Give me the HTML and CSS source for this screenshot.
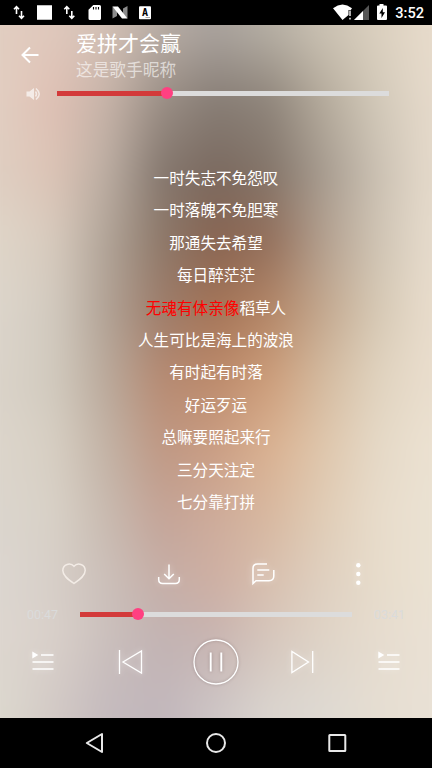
FILE: index.html
```html
<!DOCTYPE html>
<html lang="zh-CN">
<head>
<meta charset="utf-8">
<title>爱拼才会赢</title>
<link rel="stylesheet" href="styles.css">
</head>
<body>
<div class="phone">
  <header class="status">
    <svg class="status-left" width="160" height="25" viewBox="0 0 160 25">
      <g fill="none" stroke="#fff" stroke-width="1.6">
        <path d="M16.500 14V7M14 9.300l2.500-2.600L19 9.300M21.500 11v7M19 15.700l2.500 2.600 2.500-2.600"/>
        <path d="M66.800 14V7M64.300 9.300l2.500-2.600 2.500 2.600M71.800 11v7M69.300 15.700l2.500 2.600 2.500-2.600"/>
      </g>
      <path fill="#fff" d="M37 5.300h15v14.500H37zM93.300 5h6.200q1.500 0 1.500 1.500v12q0 1.500-1.500 1.500H90q-1.500 0-1.500-1.500V9.800z"/>
      <path stroke="#000" stroke-width="1.100" d="M93.500 7v2.500M96 7v2.500M98.500 7v2.500"/>
      <path fill="#8c8c8c" d="M112.500 6.500l4.500 4v5.500l-4.500 2.500zM127.500 6v12.500l-4.500-4V8.500z"/>
      <path fill="#fff" d="M112.500 6.500h5.500l9.500 12h-5.500z"/>
      <rect x="139" y="6.200" width="12" height="13" rx="1" fill="#fff"/>
      <text class="badge-letter" x="145" y="16" text-anchor="middle">A</text>
      <path stroke="#aaa" d="M145.500 17.500h4.500"/>
    </svg>
    <svg class="status-right" width="56" height="25" viewBox="0 0 56 25">
      <path fill="#fff" d="M0 8.200Q9.500.8 19 8.200L17.800 10H15.500v5L9.500 20z"/>
      <path stroke="#ddd" stroke-width="1.600" d="M17 10.500v5.500M17 17.800v1.700"/>
      <path fill="#555" d="M36 5v15H21z"/>
      <path fill="#fff" d="M30 11v9h-9z"/>
      <path fill="#fff" d="M46.500 4h4v1.500H53q1 0 1 1V19q0 1-1 1h-8q-1 0-1-1V6.500q0-1 1-1h1.500z"/>
      <path fill="#000" d="M49.800 8l-3.500 5.500h2.200V18l3.500-5.800h-2.200z"/>
    </svg>
    <span class="clock">3:52</span>
  </header>

  <main class="player">
    <div class="backdrop">
      <i class="band b1"></i><i class="band b2"></i><i class="band b3"></i><i class="band b4"></i>
      <i class="band b5"></i><i class="band b6"></i><i class="band b7"></i><i class="band b8"></i>
      <i class="band b9"></i><i class="band b10"></i><i class="band b11"></i>
    </div>

    <div class="heading">
      <svg class="back" width="20" height="20" viewBox="0 0 20 20"><path d="M18.500 10H3M10 2.500L2.500 10l7.500 7.500"/></svg>
      <div class="titles">
        <h1 class="song">爱拼才会赢</h1>
        <p class="artist">这是歌手昵称</p>
      </div>
    </div>

    <div class="volume">
      <svg class="speaker" width="15" height="14" viewBox="0 0 15 14">
        <path class="solid" d="M.5 4.500h3L8 1v12L3.500 9.500h-3z"/>
        <path class="wave" d="M9.500 4.500q2 2.500 0 5M10 1.500q6.500 5.500 0 11"/>
      </svg>
      <div class="track"><div class="fill fill-volume"><b class="thumb"></b></div></div>
    </div>

    <div class="lyrics">
      <p>一时失志不免怨叹</p>
      <p>一时落魄不免胆寒</p>
      <p>那通失去希望</p>
      <p>每日醉茫茫</p>
      <p><span class="sung">无魂有体亲像</span>稻草人</p>
      <p>人生可比是海上的波浪</p>
      <p>有时起有时落</p>
      <p>好运歹运</p>
      <p>总嘛要照起来行</p>
      <p>三分天注定</p>
      <p>七分靠打拼</p>
    </div>

    <div class="actions">
      <svg class="heart" width="26" height="24" viewBox="0 0 26 24"><path d="M13 21.500C8 18 1.800 14 1.800 8.500C1.800 2 9.500.2 13 4.300C16.500.2 24.200 2 24.200 8.500C24.200 14 18 18 13 21.500z"/></svg>
      <svg class="glow" width="26" height="24" viewBox="0 0 26 24"><path d="M13 2.500v14M8.200 12l4.800 4.800 4.800-4.800M2.700 15v2.500q0 4 4 4h12.600q4 0 4-4V15"/></svg>
      <svg class="glow" width="26" height="24" viewBox="0 0 26 24"><path d="M17 2H7.500Q3 2 3 6.300V21.500l3-2.800H19q4.800 0 4.800-4.700V8M7.300 8h12M7.300 13h6.400"/></svg>
      <svg class="glow dots" width="26" height="24" viewBox="0 0 26 24"><circle cx="13.300" cy="3.200" r="2.200"/><circle cx="13.300" cy="12" r="2.200"/><circle cx="13.300" cy="20.700" r="2.200"/></svg>
    </div>

    <div class="progress">
      <span class="time">00:47</span>
      <div class="track"><div class="fill fill-progress"><b class="thumb"></b></div></div>
      <span class="time">03:41</span>
    </div>

    <div class="controls">
      <svg class="glow list" width="26" height="24" viewBox="0 0 26 24"><path d="M11 5h12.500M2.500 12h21M2.500 19h21"/><path class="solid" d="M2.300 1.500v7L8.300 5z"/></svg>
      <svg class="glow" width="26" height="26" viewBox="0 0 26 26"><path d="M2.500 1v24M24.500 2v22L6 13z"/></svg>
      <svg class="glow pause" width="48" height="48" viewBox="0 0 48 48"><circle cx="24" cy="24" r="22"/><path d="M18.700 14.500v19M29.300 14.500v19"/></svg>
      <svg class="glow" width="26" height="26" viewBox="0 0 26 26"><path d="M23.700 2v22M2.900 2.500v21L19.500 13z"/></svg>
      <svg class="glow list" width="26" height="24" viewBox="0 0 26 24"><path d="M11 5h12.500M2.500 12h21M2.500 19h21"/><path class="solid" d="M2.300 1.500v7L8.300 5z"/></svg>
    </div>
  </main>

  <nav class="navbar">
    <svg width="22" height="22" viewBox="0 0 22 22"><path d="M18 2v18L2.800 11z"/></svg>
    <svg width="22" height="22" viewBox="0 0 22 22"><circle cx="11" cy="11" r="9"/></svg>
    <svg width="22" height="22" viewBox="0 0 22 22"><rect x="3.300" y="3" width="16" height="16" rx=".5"/></svg>
  </nav>
</div>
</body>
</html>
```
FILE: styles.css
```css
* { box-sizing: border-box; margin: 0; padding: 0; }

body {
  background: #000;
  color: #fff;
  font-family: Roboto, "Noto Sans CJK SC", sans-serif;
}

svg { display: block; }

.phone {
  width: 432px;
  height: 768px;
  display: flex;
  flex-direction: column;
  overflow: hidden;
}

/* Status bar */
.status {
  height: 25px;
  display: flex;
  align-items: center;
  padding-right: 8px;
  background: #000;
}
.status-right { margin-left: auto; }
.badge-letter { font: 900 10px "DejaVu Sans Mono", monospace; fill: #000; }
.clock {
  width: 31px;
  margin-left: 4px;
  font-size: 14.600px;
  font-weight: 500;
  line-height: 25px;
  padding-top: 2px;
  text-align: right;
}

/* Player */
.player {
  position: relative;
  height: 693px;
  overflow: hidden;
  isolation: isolate;
  background: #e3d8cb;
}

/* Blurred cover: each band fades in over the one above it */
.backdrop {
  position: absolute;
  inset: -30px;
  z-index: -1;
  filter: blur(14px);
}
.band {
  position: absolute;
  inset: 0;
  -webkit-mask-image: linear-gradient(transparent var(--from), #000 var(--to));
  mask-image: linear-gradient(transparent var(--from), #000 var(--to));
}
.b1 { --from: -1px; --to: 0px; background: linear-gradient(90deg, #e1cec1 30px, #e0c8bc 84px, #d2c0b5 138px, #b7aca4 192px, #a8a19c 246px, #b5aea3 300px, #cac1b2 354px, #dbd0bf 408px, #e8dccc 462px); }
.b2 { --from: 35px; --to: 105px; background: linear-gradient(90deg, #e2cec1 30px, #dfc0b4 84px, #c6b3a8 138px, #9a8e85 192px, #877d75 246px, #8f857b 300px, #b5ab9c 354px, #d2c9b9 408px, #e6dacb 462px); }
.b3 { --from: 105px; --to: 175px; background: linear-gradient(90deg, #dfcec1 30px, #dcc3b5 84px, #bbada2 138px, #84776e 192px, #7a695f 246px, #83756a 300px, #a79c90 354px, #cbc1b3 408px, #e5dacb 462px); }
.b4 { --from: 175px; --to: 245px; background: linear-gradient(90deg, #dfd5c8 30px, #d7cabd 84px, #b0a397 138px, #8d7869 192px, #886451 246px, #94705c 300px, #b3a08f 354px, #cfc4b4 408px, #e7dccd 462px); }
.b5 { --from: 245px; --to: 315px; background: linear-gradient(90deg, #dcd5cb 30px, #d2cabf 84px, #b0a194 138px, #9d7c6a 192px, #a57457 246px, #b38667 300px, #c3a88f 354px, #d6c9b5 408px, #e9ddcd 462px); }
.b6 { --from: 315px; --to: 385px; background: linear-gradient(90deg, #dad3c9 30px, #d1cabe 84px, #b9a89a 138px, #b68a72 192px, #bd8b6c 246px, #cd9e7b 300px, #d4bba0 354px, #e0d3bf 408px, #eadece 462px); }
.b7 { --from: 385px; --to: 455px; background: linear-gradient(90deg, #dcd5cb 30px, #d7cfc3 84px, #c2b2a5 138px, #bf9884 192px, #cb9f85 246px, #dab292 300px, #dfc7ad 354px, #e5d9c7 408px, #ece2d2 462px); }
.b8 { --from: 455px; --to: 525px; background: linear-gradient(90deg, #dbd5cd 30px, #d8d1c7 84px, #c8bab0 138px, #c4a498 192px, #ceac9b 246px, #d8b9a1 300px, #e0cdb7 354px, #e8dccb 408px, #ebe2d3 462px); }
.b9 { --from: 525px; --to: 585px; background: linear-gradient(90deg, #dcd6d0 30px, #d7cfc8 84px, #cbbfb9 138px, #c5aea7 192px, #ceafa3 246px, #d8c0af 300px, #dfd0c0 354px, #e7dccb 408px, #ebe2d3 462px); }
.b10 { --from: 585px; --to: 645px; background: linear-gradient(90deg, #ddd6cf 30px, #d9d0ca 84px, #cabfbc 138px, #c2b3b3 192px, #c8b5b2 246px, #d6c7bd 300px, #dfd4c7 354px, #e6dccf 408px, #eae1d4 462px); }
.b11 { --from: 645px; --to: 715px; background: linear-gradient(90deg, #dcd8ce 30px, #d2c9c5 84px, #c4babd 138px, #c1b6bb 192px, #cdc5c5 246px, #dad4ce 300px, #ded9d2 354px, #e5ddd1 408px, #e9e1d5 462px); }

.heading {
  height: 57px;
  display: flex;
  padding: 6px 0 0 20px;
}
.back {
  margin: 14px 36px 0 0;
  fill: none;
  stroke: #fff;
  stroke-width: 2;
}
.song { font-size: 21px; font-weight: 400; line-height: 27px; }
.artist { font-size: 16.700px; line-height: 25px; color: rgba(255, 255, 255, .6); }

.volume {
  height: 23px;
  display: flex;
  align-items: center;
  padding: 0 43px 0 26px;
}
.speaker { margin-right: 16px; opacity: .65; }
.speaker .solid { fill: #fff; }
.speaker .wave { fill: none; stroke: #fff; stroke-width: 1.500; }

.track { flex: 1; height: 4.500px; background: #dcdcdc; }
.fill { position: relative; height: 100%; background: #d33a3a; }
.fill-volume { width: 110px; }
.fill-progress { width: 58px; }
.thumb {
  position: absolute;
  right: -6px;
  top: -3.800px;
  width: 12px;
  height: 12px;
  border-radius: 50%;
  background: #ff4081;
}

.lyrics {
  padding-top: 58px;
  font-size: 15.600px;
  line-height: 32.400px;
  text-align: center;
}
.sung { color: #f00; }

.actions {
  height: 28px;
  margin-top: 40.500px;
  padding: 0 26.500px;
  display: grid;
  grid-template-columns: repeat(4, 1fr);
  align-items: center;
  justify-items: center;
}
.heart { fill: none; stroke: #f3ece6; stroke-width: 1.500; }
.glow {
  fill: none;
  stroke: #fff;
  stroke-width: 1.500;
  overflow: visible;
  filter: drop-shadow(0 0 3px rgba(255, 255, 255, .5));
}
.glow .solid, .dots circle { fill: #fff; stroke: none; }

.progress {
  height: 28px;
  margin-top: 12.500px;
  padding: 0 27px;
  display: flex;
  align-items: center;
}
.time { width: 33px; padding-top: 1px; font-size: 12.500px; color: #dadbdb; }
.progress .track { margin: 0 20px; }
.time:last-child { text-align: right; }

.controls {
  height: 48px;
  margin-top: 9.600px;
  display: grid;
  grid-template-columns: repeat(5, 1fr);
  align-items: center;
  justify-items: center;
}
.controls .glow { stroke-width: 1.300; }
.controls .pause { filter: drop-shadow(0 0 1.500px rgba(80, 60, 60, .35)); }
.pause path { stroke-width: 1.900; }

/* System navigation */
.navbar {
  height: 50px;
  padding: 0 34px;
  display: grid;
  grid-template-columns: repeat(3, 1fr);
  align-items: center;
  justify-items: center;
  background: #000;
}
.navbar svg { fill: none; stroke: #e8e8e8; stroke-width: 2; stroke-linejoin: round; }
```
